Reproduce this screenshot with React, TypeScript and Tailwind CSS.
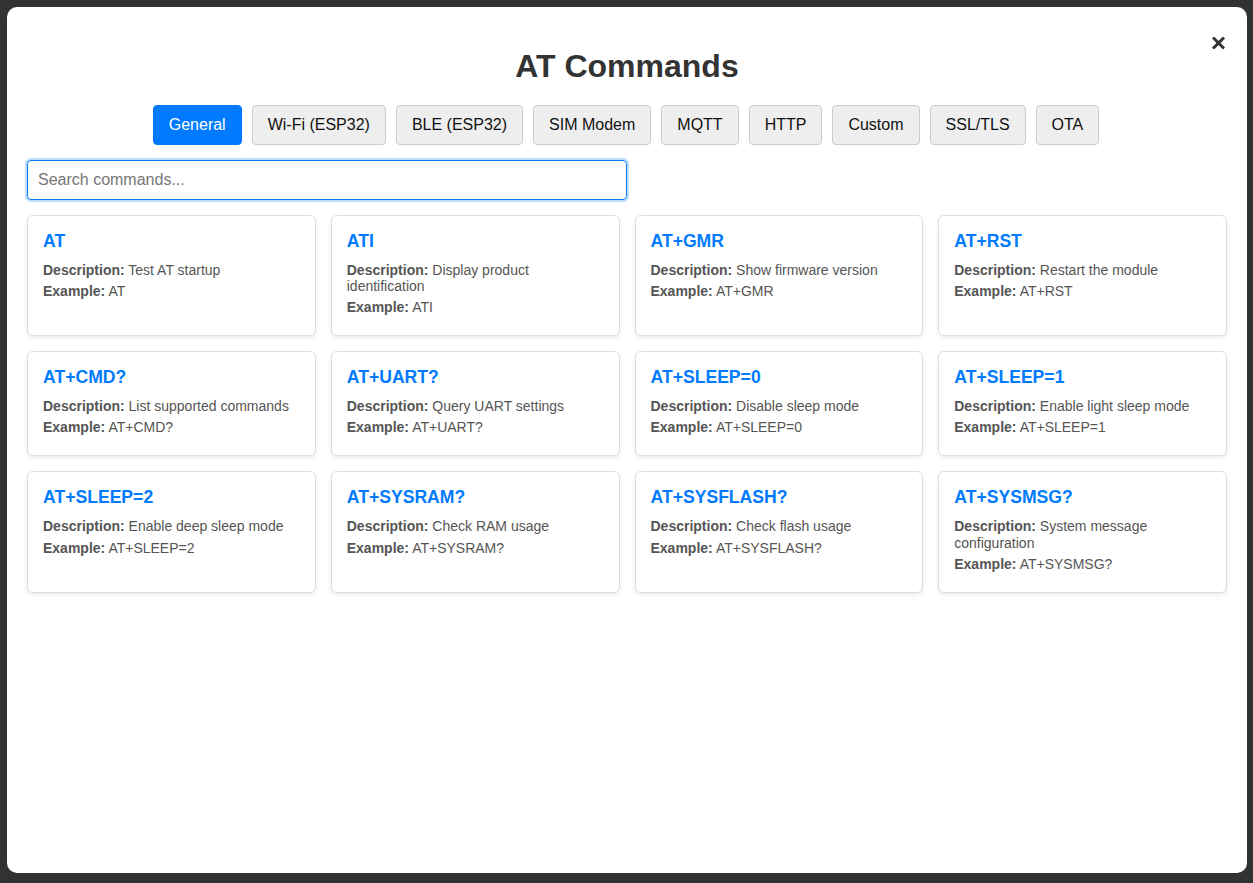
const tabs = ["General", "Wi-Fi (ESP32)", "BLE (ESP32)", "SIM Modem", "MQTT", "HTTP", "Custom", "SSL/TLS", "OTA"];

const commands = [
  { cmd: "AT", desc: "Test AT startup", ex: "AT" },
  { cmd: "ATI", desc: "Display product identification", ex: "ATI" },
  { cmd: "AT+GMR", desc: "Show firmware version", ex: "AT+GMR" },
  { cmd: "AT+RST", desc: "Restart the module", ex: "AT+RST" },
  { cmd: "AT+CMD?", desc: "List supported commands", ex: "AT+CMD?" },
  { cmd: "AT+UART?", desc: "Query UART settings", ex: "AT+UART?" },
  { cmd: "AT+SLEEP=0", desc: "Disable sleep mode", ex: "AT+SLEEP=0" },
  { cmd: "AT+SLEEP=1", desc: "Enable light sleep mode", ex: "AT+SLEEP=1" },
  { cmd: "AT+SLEEP=2", desc: "Enable deep sleep mode", ex: "AT+SLEEP=2" },
  { cmd: "AT+SYSRAM?", desc: "Check RAM usage", ex: "AT+SYSRAM?" },
  { cmd: "AT+SYSFLASH?", desc: "Check flash usage", ex: "AT+SYSFLASH?" },
  { cmd: "AT+SYSMSG?", desc: "System message configuration", ex: "AT+SYSMSG?" },
];

export default function App() {
  return (
    <div className="w-full h-[883px] bg-[#323232] pt-[7px] pl-[7px] overflow-hidden font-['Liberation_Sans',Arial,sans-serif]">
      <div className="relative w-[1240px] h-[866px] bg-white rounded-[10px] px-[20px] pt-[20px] pb-[20px]">
        <button className="absolute top-[30px] right-[22px] w-[13px] h-[12px] flex items-center justify-center">
          <svg width="13" height="12" viewBox="0 0 13 12">
            <path d="M2 1.5 L11 10.5 M11 1.5 L2 10.5" stroke="#333" strokeWidth="3" strokeLinecap="square" />
          </svg>
        </button>

        <h1 className="mt-[21px] mb-[20px] text-center text-[32px] leading-[37px] font-bold text-[#333]">AT Commands</h1>

        <div className="flex justify-center gap-[10px] mb-[15px] pr-[2px]">
          {tabs.map((t, i) => (
            <button
              key={t}
              className={
                i === 0
                  ? "px-[15px] py-[10px] text-[16px] leading-[18px] rounded-[4px] border border-[#007bff] bg-[#007bff] text-white"
                  : "px-[15px] py-[10px] text-[16px] leading-[18px] rounded-[4px] border border-[#ccc] bg-[#eee] text-[#111]"
              }
            >
              {t}
            </button>
          ))}
        </div>

        <input
          className="block w-[600px] h-[40px] px-[10px] text-[16px] border border-[#007bff] rounded-[4px] outline-none ring-2 ring-[#007bff]/25 placeholder:text-[#757575] mb-[15px]"
          placeholder="Search commands..."
        />

        <div className="grid grid-cols-4 gap-[15px]">
          {commands.map((c) => (
            <div key={c.cmd} className="border border-[#ddd] rounded-[6px] p-[15px] bg-white shadow-[0_2px_4px_rgba(0,0,0,0.08)]">
              <h3 className="mb-[10px] text-[17.6px] leading-[21px] font-bold text-[#007bff]">{c.cmd}</h3>
              <p className="my-[5px] text-[14px] leading-[1.15] text-[#555]">
                <strong>Description:</strong> {c.desc}
              </p>
              <p className="my-[5px] text-[14px] leading-[1.15] text-[#555]">
                <strong>Example:</strong> {c.ex}
              </p>
            </div>
          ))}
        </div>
      </div>
    </div>
  );
}
